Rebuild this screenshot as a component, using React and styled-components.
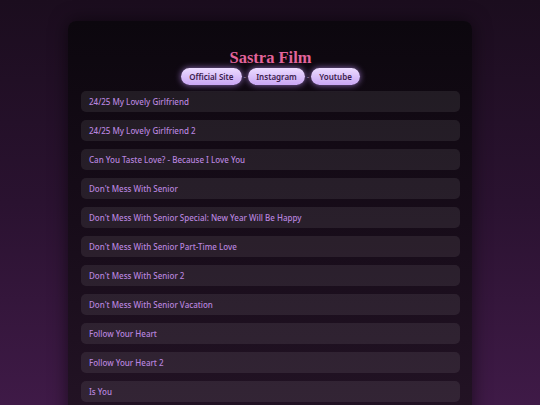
import React from "react";
import { styled, createGlobalStyle } from "styled-components";

const films = [
  "24/25 My Lovely Girlfriend",
  "24/25 My Lovely Girlfriend 2",
  "Can You Taste Love? - Because I Love You",
  "Don't Mess With Senior",
  "Don't Mess With Senior Special: New Year Will Be Happy",
  "Don't Mess With Senior Part-Time Love",
  "Don't Mess With Senior 2",
  "Don't Mess With Senior Vacation",
  "Follow Your Heart",
  "Follow Your Heart 2",
  "Is You",
];

const links = ["Official Site", "Instagram", "Youtube"];

const GlobalStyle = createGlobalStyle`
  html, body {
    margin: 0;
    min-height: 100%;
  }
  body {
    background: linear-gradient(180deg, #1b0d1e 0%, #2a1230 50%, #3f1a47 100%);
    background-attachment: fixed;
    font-family: "Noto Sans", "DejaVu Sans", sans-serif;
    overflow: hidden;
  }
`;

const Page = styled.div`
  padding-top: 21px;
  display: flex;
  justify-content: center;
`;

const Card = styled.main`
  width: 404px;
  box-sizing: border-box;
  padding: 27px 12px 20px 13px;
  border-radius: 8px;
  background: linear-gradient(180deg, #0c070e 0%, #170c19 50%, #231325 100%);
  box-shadow: 0 0 18px rgba(0, 0, 0, 0.55);
`;

const Header = styled.header`
  display: flex;
  flex-direction: column;
  align-items: center;
  margin-bottom: 6px;
`;

const Title = styled.h1`
  margin: 0;
  font-family: "Liberation Serif", "DejaVu Serif", serif;
  font-weight: 700;
  font-size: 16.5px;
  line-height: 19px;
  color: #e2649b;
`;

const LinkRow = styled.nav`
  display: flex;
  align-items: center;
  gap: 2px;
  margin-top: 1px;
`;

const Pill = styled.a`
  height: 17px;
  padding: 0 8px;
  display: flex;
  align-items: center;
  border-radius: 9px;
  background: linear-gradient(180deg, #ecdcff 0%, #c9a6f4 100%);
  box-shadow: 0 0 6px rgba(196, 150, 255, 0.7);
  color: #3b1c4c;
  font-size: 8px;
  font-weight: 600;
  text-decoration: none;
`;

const Dash = styled.span`
  color: #8c7a94;
  font-size: 8px;
`;

const List = styled.ul`
  list-style: none;
  margin: 0;
  padding: 0;
  display: flex;
  flex-direction: column;
  gap: 8px;
`;

const Item = styled.li`
  height: 21px;
  padding: 0 8px;
  display: flex;
  align-items: center;
  border-radius: 5px;
  background: rgba(255, 255, 255, 0.08);
  color: #b884df;
  font-size: 8px;
  font-weight: 500;
`;

export default function App() {
  return (
    <>
      <GlobalStyle />
      <Page>
        <Card>
          <Header>
            <Title>Sastra Film</Title>
            <LinkRow>
              {links.map((label, i) => (
                <React.Fragment key={label}>
                  {i > 0 && <Dash>-</Dash>}
                  <Pill href="#">{label}</Pill>
                </React.Fragment>
              ))}
            </LinkRow>
          </Header>
          <List>
            {films.map((name) => (
              <Item key={name}>{name}</Item>
            ))}
          </List>
        </Card>
      </Page>
    </>
  );
}
